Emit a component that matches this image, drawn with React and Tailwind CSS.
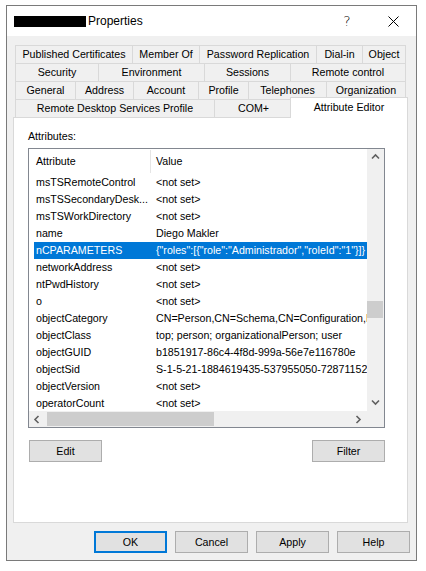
import React from "react";

const rows = [
  [
    ["Published Certificates", "w-[117px]"],
    ["Member Of", "w-[67px]"],
    ["Password Replication", "w-[117px]"],
    ["Dial-in", "w-[46px]"],
    ["Object", "flex-1 border-r"],
  ],
  [
    ["Security", "w-[83px]"],
    ["Environment", "w-[106px]"],
    ["Sessions", "w-[86px]"],
    ["Remote control", "flex-1 border-r"],
  ],
  [
    ["General", "w-[60px]"],
    ["Address", "w-[58px]"],
    ["Account", "w-[65px]"],
    ["Profile", "w-[50px]"],
    ["Telephones", "w-[78px]"],
    ["Organization", "flex-1 border-r"],
  ],
];

const data = [
  ["msTSRemoteControl", "<not set>"],
  ["msTSSecondaryDesk...", "<not set>"],
  ["msTSWorkDirectory", "<not set>"],
  ["name", "Diego Makler"],
  ["nCPARAMETERS", '{"roles":[{"role":"Administrador","roleId":"1"}]}', true],
  ["networkAddress", "<not set>"],
  ["ntPwdHistory", "<not set>"],
  ["o", "<not set>"],
  ["objectCategory", "CN=Person,CN=Schema,CN=Configuration,DC=corp,DC=local"],
  ["objectClass", "top; person; organizationalPerson; user"],
  ["objectGUID", "b1851917-86c4-4f8d-999a-56e7e116780e"],
  ["objectSid", "S-1-5-21-1884619435-537955050-728711522-1105"],
  ["objectVersion", "<not set>"],
  ["operatorCount", "<not set>"],
];

function Chevron({ dir }) {
  const paths = {
    up: "M1 5.5 L4.5 2 L8 5.5",
    down: "M1 2.5 L4.5 6 L8 2.5",
    left: "M5.5 1 L2 4.5 L5.5 8",
    right: "M2.5 1 L6 4.5 L2.5 8",
  };
  return (
    <svg width="9" height="9" viewBox="0 0 9 9">
      <path d={paths[dir]} fill="none" stroke="#606060" strokeWidth="1.6" />
    </svg>
  );
}

function Btn({ children, cls }) {
  return (
    <div
      className={`w-[73px] h-[22px] bg-[#e1e1e1] flex items-center justify-center ${cls}`}
    >
      {children}
    </div>
  );
}

export default function App() {
  return (
    <div className="w-[426px] h-[571px] bg-white pl-[6px] pt-[5px] font-['Liberation_Sans',Arial,sans-serif] text-[10.67px] text-black leading-none">
      <div className="w-[411px] h-[556px] border border-[#7a7a7a] bg-[#f0f0f0] flex flex-col">
        {/* Title bar */}
        <div className="h-[30px] shrink-0 bg-white flex items-center">
          <div className="ml-[7px] w-[72px] h-[11px] bg-black" />
          <span className="ml-[2px] text-[12px]">Properties</span>
          <div className="ml-auto flex h-full">
            <div className="w-[46px] flex items-center justify-center text-[14px] font-['DejaVu_Sans',sans-serif] font-light">
              ?
            </div>
            <div className="w-[46px] flex items-center justify-center">
              <svg width="11" height="11" viewBox="0 0 11 11">
                <path d="M0.5 0.5 L10.5 10.5 M10.5 0.5 L0.5 10.5" stroke="#000" strokeWidth="1" />
              </svg>
            </div>
          </div>
        </div>

        {/* Body */}
        <div className="flex-1 flex flex-col pl-[6px] pt-[9px]">
          {/* Tabs */}
          <div className="w-[395px] px-[2px] flex flex-col">
            {rows.map((row, i) => (
              <div key={i} className="h-[18px] flex">
                {row.map(([label, cls]) => (
                  <div
                    key={label}
                    className={`h-full flex items-center justify-center border-l border-t border-[#d9d9d9] whitespace-nowrap ${cls}`}
                  >
                    {label}
                  </div>
                ))}
              </div>
            ))}
            <div className="h-[18px] flex">
              <div className="w-[199px] h-full flex items-center justify-center border-l border-t border-[#d9d9d9]">
                Remote Desktop Services Profile
              </div>
              <div className="w-[78px] h-full flex items-center justify-center border-l border-t border-[#d9d9d9]">
                COM+
              </div>
              <div className="relative z-10 flex-1 -ml-[2px] -mr-[2px] -mt-[2px] h-[21px] bg-white border-l border-t border-r border-[#d9d9d9] flex items-center justify-center pb-[1px]">
                Attribute Editor
              </div>
            </div>
          </div>

          {/* Panel */}
          <div className="w-[395px] h-[406px] shrink-0 bg-white border border-[#d9d9d9] flex flex-col pl-[14px] pt-[12px]">
            <div className="h-[13px] flex items-center">Attributes:</div>
            <div className="mt-[5px] w-[357px] h-[280px] border border-[#828790] flex flex-col">
              <div className="h-[262px] flex">
                <div className="w-[338px] h-full overflow-hidden flex flex-col">
                  <div className="h-[25px] shrink-0 flex">
                    <div className="w-[121px] pl-[7px] flex items-center">Attribute</div>
                    <div className="w-[1px] h-[23px] mt-[1px] bg-[#e5e5e5]" />
                    <div className="flex-1 pl-[5px] flex items-center">Value</div>
                  </div>
                  {data.map(([a, v, sel]) => (
                    <div
                      key={a}
                      className={`h-[17px] shrink-0 ml-[5px] flex items-center ${
                        sel ? "bg-[#0078d7] text-white" : ""
                      }`}
                    >
                      <div className="w-[116px] pl-[2px] whitespace-nowrap overflow-hidden">{a}</div>
                      <div className="flex-1 pl-[6px] whitespace-nowrap overflow-hidden">{v}</div>
                    </div>
                  ))}
                </div>
                <div className="w-[17px] h-full bg-[#f0f0f0] flex flex-col">
                  <div className="h-[17px] flex items-center justify-center">
                    <Chevron dir="up" />
                  </div>
                  <div className="flex-1 flex flex-col pt-[135px]">
                    <div className="h-[17px] mr-[1px] bg-[#cdcdcd]" />
                  </div>
                  <div className="h-[17px] flex items-center justify-center">
                    <Chevron dir="down" />
                  </div>
                </div>
              </div>
              <div className="h-[16px] flex bg-[#f0f0f0]">
                <div className="w-[338px] flex items-center">
                  <div className="w-[17px] h-full flex items-center justify-center">
                    <Chevron dir="left" />
                  </div>
                  <div className="ml-[1px] w-[167px] h-[14px] bg-[#cdcdcd]" />
                  <div className="ml-auto w-[17px] h-full flex items-center justify-center">
                    <Chevron dir="right" />
                  </div>
                </div>
                <div className="w-[17px] h-full" />
              </div>
            </div>
            <div className="mt-[12px] w-[357px] flex justify-between">
              <Btn cls="ml-[1px] border border-[#adadad]">Edit</Btn>
              <Btn cls="border border-[#adadad]">Filter</Btn>
            </div>
          </div>

          {/* Dialog buttons */}
          <div className="mt-[8px] flex justify-end gap-[8px] pr-[6px]">
            <Btn cls="border-2 border-[#0078d7]">OK</Btn>
            <Btn cls="border border-[#adadad]">Cancel</Btn>
            <Btn cls="border border-[#adadad]">Apply</Btn>
            <Btn cls="border border-[#adadad]">Help</Btn>
          </div>
        </div>
      </div>
    </div>
  );
}
